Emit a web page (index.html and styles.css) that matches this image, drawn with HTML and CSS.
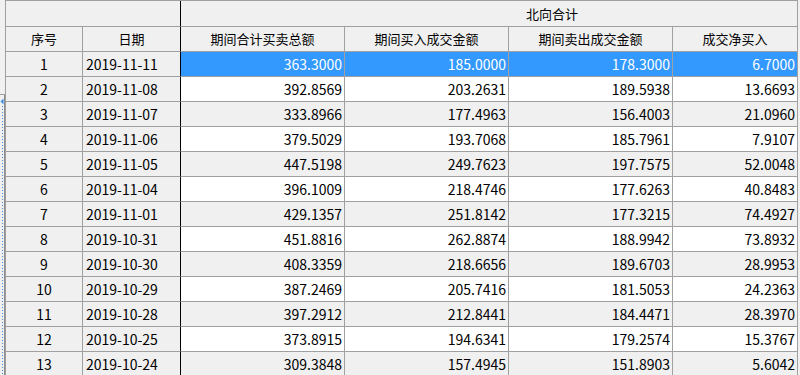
FILE: index.html
```html
<!DOCTYPE html>
<html lang="zh-CN">
<head>
<meta charset="utf-8">
<title>北向合计</title>
<link rel="stylesheet" href="styles.css">
</head>
<body>
<div class="page">
  <div class="gutter">
    <svg width="5" height="375" viewBox="0 0 5 375">
      <rect x="0" y="94" width="5" height="1" fill="#a0a0a0"/>
      <rect x="4" y="95" width="1" height="280" fill="#8c8c8c"/>
      <polygon points="0.5,101.5 3.5,98.5 3.5,104.5" fill="#3c8ce6"/>
      <line x1="2.5" y1="106" x2="2.5" y2="375" stroke="#3c8ce6" stroke-width="1" stroke-dasharray="1 2"/>
    </svg>
  </div>
  <div class="grid">
    <div class="row head1">
      <div class="c corner"></div>
      <div class="c group">北向合计</div>
    </div>
    <div class="row head2">
      <div class="c">序号</div>
      <div class="c fz-r">日期</div>
      <div class="c">期间合计买卖总额</div>
      <div class="c">期间买入成交金额</div>
      <div class="c">期间卖出成交金额</div>
      <div class="c">成交净买入</div>
    </div>
    <div class="row data odd sel"><div class="c idx">1</div><div class="c date">2019-11-11</div><div class="c n">363.3000</div><div class="c n">185.0000</div><div class="c n">178.3000</div><div class="c n">6.7000</div></div>
    <div class="row data even"><div class="c idx">2</div><div class="c date">2019-11-08</div><div class="c n">392.8569</div><div class="c n">203.2631</div><div class="c n">189.5938</div><div class="c n">13.6693</div></div>
    <div class="row data odd"><div class="c idx">3</div><div class="c date">2019-11-07</div><div class="c n">333.8966</div><div class="c n">177.4963</div><div class="c n">156.4003</div><div class="c n">21.0960</div></div>
    <div class="row data even"><div class="c idx">4</div><div class="c date">2019-11-06</div><div class="c n">379.5029</div><div class="c n">193.7068</div><div class="c n">185.7961</div><div class="c n">7.9107</div></div>
    <div class="row data odd"><div class="c idx">5</div><div class="c date">2019-11-05</div><div class="c n">447.5198</div><div class="c n">249.7623</div><div class="c n">197.7575</div><div class="c n">52.0048</div></div>
    <div class="row data even"><div class="c idx">6</div><div class="c date">2019-11-04</div><div class="c n">396.1009</div><div class="c n">218.4746</div><div class="c n">177.6263</div><div class="c n">40.8483</div></div>
    <div class="row data odd"><div class="c idx">7</div><div class="c date">2019-11-01</div><div class="c n">429.1357</div><div class="c n">251.8142</div><div class="c n">177.3215</div><div class="c n">74.4927</div></div>
    <div class="row data even"><div class="c idx">8</div><div class="c date">2019-10-31</div><div class="c n">451.8816</div><div class="c n">262.8874</div><div class="c n">188.9942</div><div class="c n">73.8932</div></div>
    <div class="row data odd"><div class="c idx">9</div><div class="c date">2019-10-30</div><div class="c n">408.3359</div><div class="c n">218.6656</div><div class="c n">189.6703</div><div class="c n">28.9953</div></div>
    <div class="row data even"><div class="c idx">10</div><div class="c date">2019-10-29</div><div class="c n">387.2469</div><div class="c n">205.7416</div><div class="c n">181.5053</div><div class="c n">24.2363</div></div>
    <div class="row data odd"><div class="c idx">11</div><div class="c date">2019-10-28</div><div class="c n">397.2912</div><div class="c n">212.8441</div><div class="c n">184.4471</div><div class="c n">28.3970</div></div>
    <div class="row data even"><div class="c idx">12</div><div class="c date">2019-10-25</div><div class="c n">373.8915</div><div class="c n">194.6341</div><div class="c n">179.2574</div><div class="c n">15.3767</div></div>
    <div class="row data odd"><div class="c idx">13</div><div class="c date">2019-10-24</div><div class="c n">309.3848</div><div class="c n">157.4945</div><div class="c n">151.8903</div><div class="c n">5.6042</div></div>
  </div>
</div>
</body>
</html>
```

FILE: styles.css
```css
html, body {
  margin: 0;
  padding: 0;
  background: #f0f0f0;
  overflow: hidden;
  width: 800px;
  height: 375px;
}

.page {
  display: flex;
  height: 375px;
  font-family: "Noto Sans CJK SC", "Noto Sans", sans-serif;
  color: #000;
}

.gutter {
  width: 5px;
  flex: none;
}

.gutter svg {
  display: block;
}

.grid {
  display: grid;
  grid-template-columns: 77px 98px 164px 164px 164px 125px;
  grid-template-rows: 26px 25px repeat(13, 25px);
  border-left: 1px solid #a0a0a0;
  border-top: 1px solid #a0a0a0;
  align-self: flex-start;
}

.row {
  display: contents;
}

.c {
  box-sizing: border-box;
  border-right: 1px solid #a0a0a0;
  border-bottom: 1px solid #a0a0a0;
  white-space: nowrap;
  overflow: hidden;
}

.head1 .c,
.head2 .c {
  background: #f0f0f0;
  font-size: 13px;
  line-height: 24px;
  text-align: center;
}

.head1 .c {
  line-height: 25px;
}

.head1 .corner {
  grid-column: span 2;
  border-right-color: #000;
}

.head1 .group {
  grid-column: span 4;
  text-align: left;
  padding-left: 345px;
}

.head2 .fz-r {
  border-right-color: #000;
}

.data .c {
  font-size: 14px;
  line-height: 25px;
}

.data .idx {
  background: #f0f0f0;
  text-align: center;
}

.data .date {
  background: #f0f0f0;
  text-align: left;
  padding-left: 3px;
  border-right-color: #000;
}

.data .n {
  text-align: right;
  padding-right: 2px;
}

.data.odd .n {
  background: #f0f0f0;
}

.data.even .n {
  background: #ffffff;
}

.data.sel .n {
  background: #3399ff;
  color: #ffffff;
}
```
